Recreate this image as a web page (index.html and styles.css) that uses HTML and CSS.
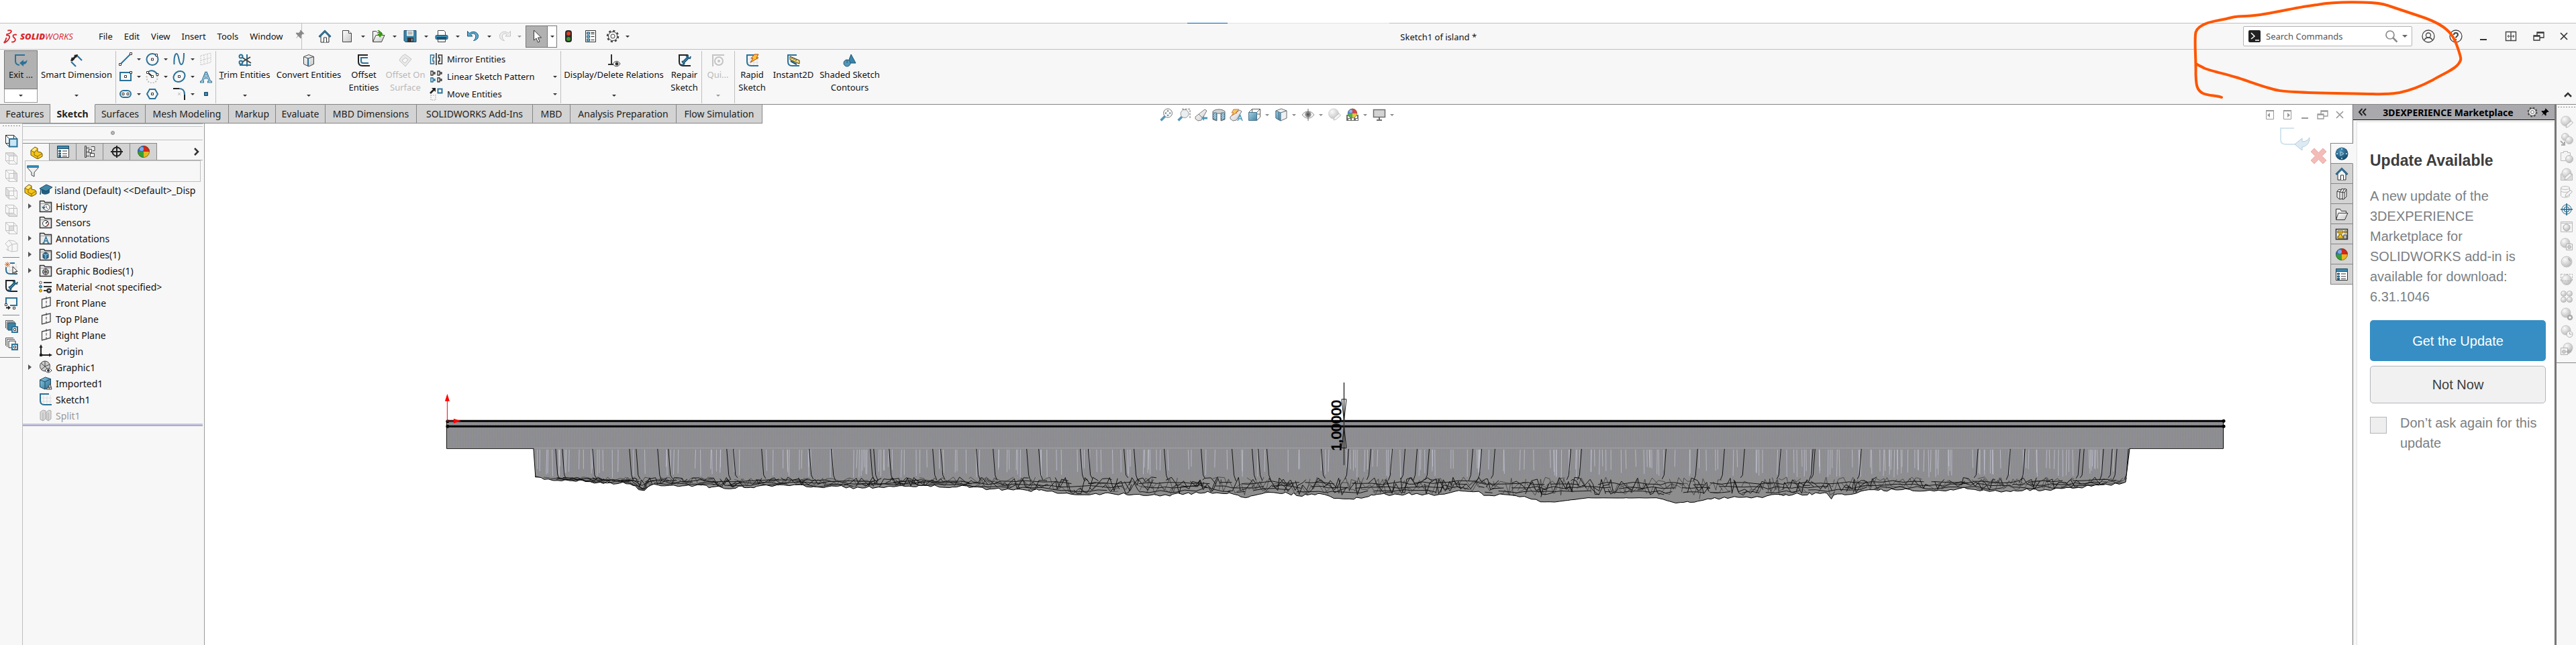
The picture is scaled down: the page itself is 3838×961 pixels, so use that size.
FILE: index.html
```html
<!DOCTYPE html>
<html lang="en">
<head>
<meta charset="utf-8">
<title>Sketch1 of island *</title>
<link rel="stylesheet" href="styles.css">
</head>
<body>
<svg class="defs" aria-hidden="true">
  <defs>
    <linearGradient id="gb" x1="0" y1="0" x2="1" y2="1"><stop offset="0" stop-color="#8fc8e2"/><stop offset="1" stop-color="#2a7095"/></linearGradient>
    <linearGradient id="gg" x1="0" y1="0" x2="1" y2="1"><stop offset="0" stop-color="#fff"/><stop offset="1" stop-color="#c4c4c4"/></linearGradient>
    <radialGradient id="gs" cx=".35" cy=".3" r=".8"><stop offset="0" stop-color="#fafafa"/><stop offset="1" stop-color="#b4b4b4"/></radialGradient>
    <radialGradient id="gn" cx=".4" cy=".3" r=".8"><stop offset="0" stop-color="#4d94ba"/><stop offset="1" stop-color="#0d3c5c"/></radialGradient>
    <pattern id="hatch" width="3" height="3" patternUnits="userSpaceOnUse"><path d="M0 3L3 0" stroke="#2a7095"/></pattern>
    <pattern id="lines" width="4" height="40" patternUnits="userSpaceOnUse"><rect width="4" height="40" fill="#8f8f8f"/><path d="M1.500 0L2.500 40" stroke="#8183a0" stroke-opacity=".55"/></pattern>
  </defs>
  <symbol id="home" viewBox="0 0 20 20"><path d="M4 9v10h12V9l-6-6z" fill="#f4f4f4" stroke="#333"/><path d="M8.500 19v-7h4v7" fill="#fff" stroke="#333"/><path d="M1.500 11L10 2.500l8.500 8.500" fill="none" stroke="#1b5577" stroke-width="3"/><path d="M2 10.500L10 2.500l8 8" fill="none" stroke="#4d9cc1"/></symbol>
  <symbol id="doc" viewBox="0 0 20 20"><path d="M3.500 1.500h9l4 4v13h-13z" fill="url(#gg)" stroke="#444"/><path d="M12.500 1.500v4h4" fill="#fff" stroke="#444"/></symbol>
  <symbol id="open" viewBox="0 0 20 20"><path d="M1.500 18V2.500h5l2 2h6V8" fill="#eee" stroke="#444"/><path d="M1.500 18.500L6 8.500h13l-4.500 10z" fill="url(#gg)" stroke="#444"/><path d="M8 1c4 0 6 2 6 5h3l-5 6-4-6h3c0-2-1-3-3-5z" fill="#399a12"/></symbol>
  <symbol id="folder" viewBox="0 0 20 20"><path d="M1.500 18V2.500h6l2 3h7V8" fill="#eee" stroke="#333"/><path d="M1.500 18.500L5 8.500h14l-4.500 10z" fill="url(#gg)" stroke="#333"/></symbol>
  <symbol id="save" viewBox="0 0 20 20"><path d="M1 1.500h18v17H3l-2-2z" fill="#3a84a9" stroke="#20506c"/><path d="M5 1.500h10v8H5z" fill="#eee"/><path d="M6.500 4h7M6.500 6.500h7" stroke="#777"/><path d="M6 12h9v7H6z" fill="#333"/><path d="M12 13.500h1.500v4H12z" fill="#7bc0e0"/></symbol>
  <symbol id="print" viewBox="0 0 20 20"><path d="M4.500 1.500h9l2 2V9h-11z" fill="#fff" stroke="#444"/><rect x="1" y="8.500" width="18" height="6" rx="1.500" fill="#3a8bb3" stroke="#20506c"/><path d="M3 12.500h14" stroke="#12384f" stroke-width="2"/><path d="M4.500 14.500h11v4h-11z" fill="#eee" stroke="#444"/></symbol>
  <symbol id="undo" viewBox="0 0 20 20"><path d="M1.500 2.500v7.500h7.500L6.500 7.500C10 4 15 7 13.500 12c-.5 2-1.500 3-3 4.500C15 16 18 13 17.500 9c-.6-5-7.500-8-13-3.500z" fill="#5aa9cc" stroke="#1e5d80"/></symbol>
  <symbol id="redo" viewBox="0 0 20 20"><path d="M18.500 2.500v7.500H11l2.500-2.500C10 4 5 7 6.500 12c.5 2 1.500 3 3 4.500C5 16 2 13 2.500 9c.6-5 7.500-8 13-3.500z" fill="#eee" stroke="#c4c4c4"/></symbol>
  <symbol id="cursor" viewBox="0 0 20 20"><path d="M5.500 1v15l3.500-3 2.500 6 2.500-1-2.500-6h5z" fill="#fff" stroke="#333"/></symbol>
  <symbol id="traffic" viewBox="0 0 20 20"><rect x="5" y="1" width="10" height="18" rx="4" fill="#2b2b2b"/><circle cx="10" cy="6" r="3" fill="#e03a1e"/><circle cx="10" cy="14" r="3" fill="#3b9a2b"/></symbol>
  <symbol id="options" viewBox="0 0 20 20"><path d="M2.500 1.500h15v17h-15z" fill="#f6f6f6" stroke="#333"/><path d="M4.500 4h4v3h-4zM4.500 9h4v3h-4zM4.500 14h4v3h-4z" fill="#77bfe0" stroke="#20506c"/><path d="M10.500 4.500h5M10.500 6.500h5M10.500 10.500h5M10.500 15.500h5" stroke="#333"/></symbol>
  <symbol id="gear" viewBox="0 0 20 20"><circle cx="10" cy="10" r="8" fill="none" stroke="#444" stroke-width="2.500" stroke-dasharray="3.140 3.140"/><circle cx="10" cy="10" r="6.700" fill="#f2f2f2" stroke="#444"/><circle cx="10" cy="10" r="3" fill="#fff" stroke="#444"/></symbol>
  <symbol id="pin" viewBox="0 0 20 20"><path d="M11 2l7 7-1.500 1-1.500-.5-3 3 .5 4-1.500 1.500-4-4.500-5 5 4-6-4-4L3.500 7l4 .5 3-3L10 3z"/></symbol>
  <symbol id="exit" viewBox="0 0 20 20"><path d="M16 2H2v9c0 4 2 5.500 6 6" fill="none" stroke="#2a7299" stroke-width="2"/><path d="M8 14l6-5v3c3 0 4-1 5.500-3 0 4-2 7-5.500 7v3z" fill="#2a7299"/></symbol>
  <symbol id="smart" viewBox="0 0 20 20"><path d="M10 2l8 8M2 12l7 7" stroke="#2a7299" stroke-width="2.200"/><path d="M2.500 10.500L9 3.500" stroke="#222" stroke-width="3"/><path d="M1 11l2-6 4 4zM12 1l-6 1 4 4z" fill="#222"/></symbol>
  <symbol id="line" viewBox="0 0 20 20"><path d="M2 18L18 2" stroke="#2a7299" stroke-width="2"/><path d="M.5 16.500h3v3h-3zM16.500.5h3v3h-3z" fill="#fff" stroke="#333"/></symbol>
  <symbol id="circle" viewBox="0 0 20 20"><circle cx="10" cy="10.500" r="8.500" fill="none" stroke="#2a7299" stroke-width="2"/><path d="M8.500 9h3v3h-3zM14.500 2.500h3v3h-3z" fill="#fff" stroke="#333"/></symbol>
  <symbol id="spline" viewBox="0 0 20 20"><path d="M2.500 18C2 7 4 2 6 2c4 0 3 16 7 16 3 0 4-6 4-17" fill="none" stroke="#2a7299" stroke-width="2"/></symbol>
  <symbol id="plane3" viewBox="0 0 20 20"><path d="M2 5l15-4v14L2 19zM2 12l15-4M7 4v14M12 3v13" fill="none" stroke="#c4c4c4" stroke-dasharray="2 1"/></symbol>
  <symbol id="rect" viewBox="0 0 20 20"><path d="M2 4h16v12H2z" fill="none" stroke="#2a7299" stroke-width="2"/><path d="M8.500 8.500h3v3h-3zM16.500 2.500h3v3h-3z" fill="#fff" stroke="#333"/></symbol>
  <symbol id="arc" viewBox="0 0 20 20"><path d="M4 3a8.500 8.500 0 0 1 13 4" fill="none" stroke="#2a7299" stroke-width="2"/><path d="M17 9a8 8 0 1 1-15 0" fill="none" stroke="#bbb" stroke-width="2" stroke-dasharray="2 2"/><path d="M3 4l7 6" stroke="#222" stroke-width="2"/><path d="M8.500 8.500h3v3h-3zM16 5.500h3v3h-3zM1.500 2.500h3v3h-3z" fill="#fff" stroke="#333"/></symbol>
  <symbol id="ellipse" viewBox="0 0 20 20"><ellipse cx="10" cy="10" rx="9" ry="7.500" transform="rotate(-38 10 10)" fill="none" stroke="#2a7299" stroke-width="2"/><path d="M8.500 8.500h3v3h-3z" fill="#fff" stroke="#333"/></symbol>
  <symbol id="text" viewBox="0 0 20 20"><path d="M10 3L4 18M10 3l6 15M6 12h8M1 18h6M12 18h7" fill="none" stroke="#2a7299" stroke-width="3"/><path d="M10 4L4 18M10 4l6 14M6 12h8M2 18h4M13 18h5" fill="none" stroke="#d5eaf4"/></symbol>
  <symbol id="slot" viewBox="0 0 20 20"><rect x="2" y="5" width="16" height="10" rx="5" fill="none" stroke="#2a7299" stroke-width="2"/><path d="M5 8.500h3v3H5zM12 8.500h3v3h-3z" fill="#fff" stroke="#333"/></symbol>
  <symbol id="hex" viewBox="0 0 20 20"><path d="M6 3h8l4 7-4 7H6l-4-7z" fill="none" stroke="#2a7299" stroke-width="2"/><path d="M8.500 8.500h3v3h-3z" fill="#fff" stroke="#333"/></symbol>
  <symbol id="fillet" viewBox="0 0 20 20"><path d="M1 2h9" stroke="#222" stroke-width="2"/><path d="M10 2c6 0 8 3 8 9" fill="none" stroke="#2a7299" stroke-width="2"/><path d="M18 11v8" stroke="#222" stroke-width="2"/><path d="M8 8l4 4M12 8l-4 4" stroke="#bbb"/></symbol>
  <symbol id="point" viewBox="0 0 20 20"><path d="M7.500 7.500h5v5h-5z" fill="#3a8bb3" stroke="#173f57"/></symbol>
  <symbol id="trim" viewBox="0 0 20 20"><path d="M13 1v18M2 17h17" stroke="#2a7299" stroke-width="2"/><path d="M5 5l14 9M5 13l13-8" stroke="#444" stroke-width="2"/><circle cx="4" cy="4" r="2.500" fill="none" stroke="#2a7299" stroke-width="2"/><circle cx="4" cy="13" r="2.500" fill="none" stroke="#2a7299" stroke-width="2"/></symbol>
  <symbol id="cube" viewBox="0 0 20 20"><path d="M2.500 4.500L10 1.500l7.500 3v11L10 19l-7.500-3.500z" fill="url(#gg)" stroke="#444"/><path d="M2.500 4.500L9 7v11.500M9 7l8.500-2.500" fill="none" stroke="#444"/><path d="M9 7v11" stroke="#2a7299" stroke-width="2"/></symbol>
  <symbol id="offset" viewBox="0 0 20 20"><path d="M16 2H2v10c0 4 2 6 6 6h11" fill="none" stroke="#222" stroke-width="2"/><path d="M16 6H6v5c0 2 1 3 3 3h8" fill="none" stroke="#2a7299" stroke-width="2"/></symbol>
  <symbol id="offsurf" viewBox="0 0 20 20"><path d="M10 1l9 7-9 11-9-9c2-5 5-8 9-9z" fill="#e9e9e9" stroke="#c4c4c4"/><path d="M10 6l4 3-5 5-4-4z" fill="#f7f7f7" stroke="#c4c4c4"/></symbol>
  <symbol id="mirror" viewBox="0 0 20 20"><path d="M10 1v18" stroke="#222" stroke-width="1.500"/><path d="M1.500 4v13h5v-4H5V8h1.500V4z" fill="none" stroke="#2a7299" stroke-width="1.500"/><path d="M18.500 4v13h-5v-4H15V8h-1.500V4z" fill="none" stroke="#333" stroke-width="1.500"/></symbol>
  <symbol id="pattern" viewBox="0 0 20 20"><path d="M2 2v6h3V6h3V4H5V2zM12 2v6h3V6h3V4h-3V2zM12 12v6h3v-2h3v-2h-3v-2z" fill="none" stroke="#333" stroke-width="1.300"/><path d="M2 12v6h3v-2h3v-2H5v-2z" fill="none" stroke="#2a7299" stroke-width="1.500"/></symbol>
  <symbol id="move" viewBox="0 0 20 20"><path d="M1 9l6-6" stroke="#222" stroke-width="2.500"/><path d="M9 1v6L3 1z" fill="#222"/><path d="M12.500 2.500h6v6h-6z" fill="#fff" stroke="#2a7299" stroke-width="2"/><path d="M2 12h7v7H2z" fill="none" stroke="#bbb" stroke-width="1.500" stroke-dasharray="1.500 1.500"/></symbol>
  <symbol id="relations" viewBox="0 0 20 20"><path d="M6 1v14M1 16h9" stroke="#333" stroke-width="2"/><path d="M8 15c4-5 8-5 11 0-3 5-8 5-11 0z" fill="#fff" stroke="#333"/><circle cx="14" cy="15" r="2.500" fill="#333"/></symbol>
  <symbol id="repair" viewBox="0 0 20 20"><path d="M15 2H2v10c0 4 2 6 6 6h11" fill="none" stroke="#222" stroke-width="2"/><path d="M7 14l8-8" stroke="#1e5877" stroke-width="4"/><path d="M6 11l2 2M7 14l7-8M12 4l3-1v3l3 1 1-3M5 16l3 1 2-3" stroke="#1e5877" stroke-width="2" fill="none"/><path d="M7.500 13.500l7-7" stroke="#5aa9cc"/></symbol>
  <symbol id="quick" viewBox="0 0 20 20"><path d="M2 19V2h17" fill="none" stroke="#c4c4c4" stroke-width="2"/><circle cx="11" cy="11" r="6" fill="none" stroke="#c4c4c4" stroke-width="2"/><circle cx="11" cy="11" r="2" fill="#c4c4c4"/></symbol>
  <symbol id="rapid" viewBox="0 0 20 20"><path d="M7 3v16M12 3v16M17 3v16M3 8h16M3 13h16" stroke="#ddd"/><path d="M12 2H2v10c0 4 2 6 6 6h11" fill="none" stroke="#2a7299" stroke-width="2"/><path d="M13 1h6l-3 5h3L7 13l4-6H8z" fill="#ffc52e" stroke="#b0430c"/></symbol>
  <symbol id="instant" viewBox="0 0 20 20"><path d="M15 2H2v10c0 4 2 6 6 6h11" fill="none" stroke="#2a7299" stroke-width="2"/><path d="M5 4l14 6v5L5 9z" fill="#ffe06a" stroke="#333"/><path d="M8 5v3M11 6.500v3M14 8v3" stroke="#333"/><path d="M6 11l9 5" stroke="#1e5877" stroke-width="2.500"/></symbol>
  <symbol id="shaded" viewBox="0 0 20 20"><path d="M12 1l7 13H7z" fill="#3a84a9" stroke="#1e5877"/><circle cx="6" cy="14" r="5" fill="#5797b8" stroke="#1e5877"/><path d="M6 14V9" stroke="#1e5877"/></symbol>
  <symbol id="sketch" viewBox="0 0 20 20"><path d="M7 3v16M12 3v16M17 3v16M3 8h16M3 13h16" stroke="#ddd"/><path d="M15 2H2v10c0 4 2 6 6 6h11" fill="none" stroke="#2a7299" stroke-width="2"/></symbol>
  <symbol id="sketchnew" viewBox="0 0 20 20"><path d="M7 3v16M12 3v16M17 3v16M3 8h16M3 13h16" stroke="#ddd"/><path d="M8 2h7M2 8v4c0 4 2 6 6 6h11" fill="none" stroke="#2a7299" stroke-width="2"/><path d="M4 0v8M0 4h8M1 1l6 6M7 1L1 7" stroke="#d9661c"/><path d="M12 7v10l2.500-2 1.500 4 1.500-1-1.500-3.500h3z" fill="#fff" stroke="#333"/></symbol>
  <symbol id="entmove" viewBox="0 0 20 20"><path d="M2 11V2h16v11H8" fill="none" stroke="#2a7299" stroke-width="2"/><path d="M.5 10.500h3v3h-3zM12.500 15.500h3v3h-3z" fill="#fff" stroke="#333"/><path d="M2 16.500h4" stroke="#222" stroke-width="2"/><path d="M5 13.500l4 3-4 3z" fill="#222"/></symbol>
  <symbol id="stack" viewBox="0 0 20 20"><path d="M1.500 13V1.500H13M3.500 15V3.500H15" fill="none" stroke="#555"/><path d="M5 5h11v11H5z" fill="#3a84a9" stroke="#1e4a63"/><path d="M11 11h8v8h-8z" fill="#fff" stroke="#2a7299" stroke-width="2"/><path d="M13.500 13.500h3v3h-3z" fill="#fff" stroke="#333"/></symbol>
  <symbol id="stack2" viewBox="0 0 20 20"><path d="M1.500 13V1.500H13M3.500 15V3.500H15" fill="none" stroke="#555"/><path d="M6 6h10v10H6z" fill="#f7f7f7" stroke="#333"/><path d="M11 11h8v8h-8z" fill="#fff" stroke="#2a7299" stroke-width="2"/><path d="M13.500 13.500h3v3h-3z" fill="#fff" stroke="#333"/></symbol>
  <symbol id="viewf" viewBox="0 0 20 20"><path d="M1.500 1.500h12v12h-12zM1.500 1.500l5 5M13.500 1.500l5 5M1.500 13.500l5 5" fill="none" stroke="#333"/><path d="M7 7h11.500v11.500H7z" fill="#c9e6f5" stroke="#2a7299" stroke-width="2"/></symbol>
  <symbol id="view0" viewBox="0 0 20 20"><path d="M1.500 1.500h12v12h-12zM6.500 6.500h12v12h-12zM1.500 1.500l5 5M13.500 1.500l5 5M1.500 13.500l5 5M13.500 13.500l5 5" fill="none" stroke="#c2c2c2"/></symbol>
  <symbol id="view1" viewBox="0 0 20 20"><path d="M1.500 1.500h12l5 5h-12z" fill="#ddd"/><use href="#view0"/></symbol>
  <symbol id="view2" viewBox="0 0 20 20"><path d="M13.500 1.500l5 5v12l-5-5z" fill="#ddd"/><use href="#view0"/></symbol>
  <symbol id="view3" viewBox="0 0 20 20"><path d="M1.500 1.500l5 5v12l-5-5z" fill="#ddd"/><use href="#view0"/></symbol>
  <symbol id="view4" viewBox="0 0 20 20"><path d="M1.500 13.500h12l5 5h-12z" fill="#ddd"/><use href="#view0"/></symbol>
  <symbol id="view5" viewBox="0 0 20 20"><path d="M6.500 6.500h7v7h-7z" fill="#ddd"/><use href="#view0"/></symbol>
  <symbol id="view6" viewBox="0 0 20 20"><path d="M6 2l8 1 5 4v11l-9 1-8-4M6 2L1 7l4 5 6-4zM5 12v6M11 8l8-1M11 8v11" fill="none" stroke="#c2c2c2"/></symbol>
  <symbol id="part" viewBox="0 0 20 20"><path d="M2 7l6-5 4 2v5l5 1 2 2v4l-7 4-10-6z" fill="#f5c518" stroke="#6b5208"/><path d="M2 7l5 3 5-4M7 10v4l5 2 6-4M12 16v3" fill="none" stroke="#8a6a0c"/><path d="M3 7l5-4 3 1.500L7 8.500z" fill="#ffe98a"/></symbol>
  <symbol id="props" viewBox="0 0 20 20"><path d="M1.500 2h17v16.500h-17z" fill="#fff" stroke="#333"/><path d="M1.500 1.500h17v4h-17z" fill="#3a8bb3" stroke="#1e4a63"/><path d="M3.500 8h3v2h-3zM3.500 12h3v2h-3zM3.500 15.500h3v2h-3z" fill="#3a8bb3" stroke="#1e4a63"/><path d="M9 9h7M9 13h7M9 16.500h7" stroke="#333"/></symbol>
  <symbol id="config" viewBox="0 0 20 20"><path d="M4.500 1.500h-2v17h2zM5 10.500h4M5 4.500h4M5 16.500h4" fill="none" stroke="#444"/><path d="M8.500 6.500h4v5h-4zM12 2.500h5v6h-3M10.500 12.500h6v5h-6z" fill="#eee" stroke="#444"/></symbol>
  <symbol id="target" viewBox="0 0 20 20"><circle cx="10" cy="10" r="6.500" fill="none" stroke="#222" stroke-width="2"/><path d="M10 1v18M1 10h18" stroke="#222" stroke-width="2"/></symbol>
  <symbol id="ball" viewBox="0 0 20 20"><circle cx="10" cy="10" r="9" fill="#e5b821"/><path d="M10 10V1a9 9 0 0 0-9 9z" fill="#2f6fd0"/><path d="M10 10V1a9 9 0 0 1 9 9z" fill="#d3281f"/><path d="M10 10H1a9 9 0 0 0 9 9z" fill="#35a035"/><circle cx="7" cy="6" r="3" fill="#fff" fill-opacity=".4"/><circle cx="10" cy="10" r="8.500" fill="none" stroke="#333" stroke-opacity=".5"/></symbol>
  <symbol id="filter" viewBox="0 0 20 20"><path d="M2 2h16v3l-6 7v6l-4-2v-4L2 5z" fill="#eee" stroke="#444"/><path d="M1 1.500h18v3.500H1z" fill="#2f86b0"/></symbol>
  <symbol id="cap" viewBox="0 0 20 20"><path d="M4 9v6c4 3 9 2 12-1V8z" fill="#235f80"/><path d="M1 8l10-6 9 4-9 6z" fill="#3f87aa" stroke="#1b4a64"/><path d="M3 9l-1 8" stroke="#1b4a64" stroke-width="1.500"/></symbol>
  <symbol id="fold" viewBox="0 0 20 20"><path d="M1.500 18.500V2.500h6l1.500 2h9.500v14z" fill="#eaeaea" stroke="#333" stroke-width="1.500"/><path d="M2 6.500h16" stroke="#999"/></symbol>
  <symbol id="fhist" viewBox="0 0 20 20"><use href="#fold"/><circle cx="11.500" cy="12" r="4.500" fill="#fff" stroke="#444"/><path d="M4 11l3 4 3-4z" fill="#2a7299"/><path d="M11 9.500V12l2 2" fill="none" stroke="#444"/></symbol>
  <symbol id="fsens" viewBox="0 0 20 20"><use href="#fold"/><circle cx="10" cy="12" r="4.500" fill="#fff" stroke="#333"/><path d="M10 12l3-3" stroke="#222" stroke-width="1.500"/><path d="M10 16l4-4v3z" fill="#e03a1e"/></symbol>
  <symbol id="fann" viewBox="0 0 20 20"><use href="#fold"/><path d="M7 17l3.500-9 3.500 9M8 14h5M5.500 17h3M12.500 17h3" fill="none" stroke="#2a7299" stroke-width="1.500"/></symbol>
  <symbol id="fsolid" viewBox="0 0 20 20"><use href="#fold"/><path d="M6 9l4-2 4 2v6l-4 2-4-2z" fill="#2a7299" stroke="#153f57"/><path d="M6 9l4 2 4-2M10 11v6" stroke="#9fd0e6" fill="none"/></symbol>
  <symbol id="fgraph" viewBox="0 0 20 20"><use href="#fold"/><circle cx="10" cy="12" r="4.500" fill="#bbb" stroke="#444"/><path d="M10 7.500v9M6 10l8 4M14 10l-8 4" stroke="#444"/></symbol>
  <symbol id="material" viewBox="0 0 20 20"><path d="M7 4h12M7 10h12M7 16h5" stroke="#333" stroke-width="2"/><circle cx="2.500" cy="4" r="1.800" fill="#fff" stroke="#555"/><circle cx="2.500" cy="10" r="2" fill="#4d9cc1" stroke="#1e5877"/><circle cx="2.500" cy="16" r="2" fill="#f5c518" stroke="#8a6a0c"/><circle cx="15" cy="16" r="2.500" fill="none" stroke="#333" stroke-width="2.500"/></symbol>
  <symbol id="plane" viewBox="0 0 20 20"><path d="M4.500 5L17 2v12.500L4.500 18z" fill="none" stroke="#444" stroke-width="1.300"/><path d="M11 1v18" stroke="#444" stroke-dasharray="4 2"/></symbol>
  <symbol id="origin" viewBox="0 0 20 20"><path d="M3 3v13h14" fill="none" stroke="#222" stroke-width="2"/><path d="M3 0l2.500 5h-5zM20 16l-5-2.500v5zM1 14h4v4H1z" fill="#222"/></symbol>
  <symbol id="graphic" viewBox="0 0 20 20"><circle cx="9" cy="8.500" r="7.500" fill="#ccc" stroke="#444"/><path d="M9 1v8l-6 5M9 9l7-3M9 9L3 4M9 9l5 5" stroke="#444" fill="none"/><path d="M9 15c3-4 7-4 10 0-3 4-7 4-10 0z" fill="#fff" stroke="#333"/><circle cx="14" cy="15" r="2" fill="#333"/></symbol>
  <symbol id="imported" viewBox="0 0 20 20"><path d="M1.500 5l8-4 8 2.500v11L9 19l-7.500-3.500z" fill="url(#gb)" stroke="#1b4a64"/><path d="M1.500 5L9 8v11M9 8l8.500-4.500" fill="none" stroke="#1b4a64"/><path d="M11 19l6-8 2 8zM14 15l2 4M13 16h6" fill="#ddd" stroke="#444"/></symbol>
  <symbol id="split" viewBox="0 0 20 20"><path d="M2 5l4-3 4 1v12l-4 3-4-2zM11 5l4-3 3 1v12l-4 3-3-2z" fill="#d8d8d8" stroke="#aaa"/><path d="M6 6v12M14 6v12" stroke="#aaa"/></symbol>
  <symbol id="zoomfit" viewBox="0 0 20 20"><path d="M1.500 18.500L8 12" stroke="#3a84a9" stroke-width="3.500"/><circle cx="12" cy="7.500" r="6.500" fill="#eef5f8" stroke="#666"/><path d="M12 3l-1.500 2h3zM12 12l-1.500-2h3zM7.500 7.500l2-1.500v3zM16.500 7.500l-2-1.500v3z" fill="#333"/></symbol>
  <symbol id="zoomarea" viewBox="0 0 20 20"><path d="M7 1.500h12v14" fill="none" stroke="#555" stroke-dasharray="3 1.500"/><path d="M1.500 18.500L7 13" stroke="#3a84a9" stroke-width="3.500"/><circle cx="11" cy="8.500" r="6" fill="#e4ecf0" stroke="#888"/></symbol>
  <symbol id="scope" viewBox="0 0 20 20"><path d="M1 13L15 2l3 2-8 14-5 1-4-3z" fill="url(#gg)" stroke="#666"/><path d="M6 9l5 5" stroke="#666"/><path d="M10 15l4-4v2.500h5v3h-5V19z" fill="#2f86b0"/></symbol>
  <symbol id="section" viewBox="0 0 20 20"><path d="M1 5c4-4 14-4 18 0v12l-6 2V8H7v11l-6-2z" fill="#ccc" stroke="#555"/><path d="M1.500 7h5v11l-5-2zM13.500 7h5v9l-5 2z" fill="#a8d4e8"/><path d="M1.500 7h5v11l-5-2zM13.500 7h5v9l-5 2z" fill="url(#hatch)" stroke="#2a5d78"/></symbol>
  <symbol id="dynann" viewBox="0 0 20 20"><path d="M1 13L15 3l3 2-8 13-5 1-4-3z" fill="url(#gg)" stroke="#666"/><path d="M6 2h8L9 7h2l-8 4 3-4H3z" fill="#f7c04a" stroke="#c4611a"/><path d="M12 19l3.500-9 3.500 9M13 16h5" fill="none" stroke="#2f86b0" stroke-width="1.500"/></symbol>
  <symbol id="orient" viewBox="0 0 20 20"><path d="M1.500 6.500l5-5h12v12l-5 5M6.500 1.500v5M13.500 6.500l5-5M14 9h4" fill="none" stroke="#444"/><path d="M1.500 6.500h12v12h-12z" fill="url(#gb)" stroke="#2a5d78"/></symbol>
  <symbol id="display" viewBox="0 0 20 20"><path d="M2 4l8-3 8 3v11l-9 4-7-4z" fill="#eee" stroke="#555"/><path d="M2 4l7 3v12l-7-4z" fill="url(#gb)" stroke="#2a5d78"/><path d="M9 7l9-3M6 5.500v12" stroke="#2a5d78"/></symbol>
  <symbol id="eye" viewBox="0 0 20 20"><path d="M1 10c5-7 13-7 18 0-5 7-13 7-18 0z" fill="#eee" stroke="#888"/><circle cx="10" cy="9.500" r="4.500" fill="#777"/><circle cx="10" cy="9.500" r="2" fill="#333"/><path d="M10 1v18" stroke="#555"/></symbol>
  <symbol id="spheredit" viewBox="0 0 20 20"><circle cx="9" cy="8.500" r="7.500" fill="url(#gs)" stroke="#ccc"/><path d="M9 18l1-4 7-6 2.500 3-7 6z" fill="#f4f4f4" stroke="#b5b5b5"/></symbol>
  <symbol id="scene" viewBox="0 0 20 20"><path d="M1 10h18v9H1z" fill="#555"/><path d="M3 12h3v3H3zM9 15h3v3H9zM14 12h3v3h-3zM4 16h3v2H4zM15 16h3v2h-3z" fill="#fff"/><svg x="2" y="0" width="16" height="16"><use href="#ball"/></svg></symbol>
  <symbol id="monitor" viewBox="0 0 20 20"><path d="M1.500 2.500h17v11h-17z" fill="#ccc" stroke="#555" stroke-width="1.500"/><path d="M10 14v4M6 18h8" stroke="#555" stroke-width="2"/></symbol>
  <symbol id="cmd" viewBox="0 0 20 20"><rect x="1" y="1" width="18" height="18" rx="2" fill="#222"/><path d="M5 5l5 5-5 4M11 16h6" fill="none" stroke="#fff" stroke-width="1.500"/></symbol>
  <symbol id="search" viewBox="0 0 20 20"><circle cx="8" cy="8" r="6" fill="none" stroke="#8a8a8a" stroke-width="1.700"/><path d="M12.500 12.500l6 6" stroke="#8a8a8a" stroke-width="2.500"/></symbol>
  <symbol id="user" viewBox="0 0 20 20"><circle cx="10" cy="10" r="9" fill="none" stroke="#444" stroke-width="1.300"/><circle cx="10" cy="8.500" r="3.500" fill="none" stroke="#444" stroke-width="1.300"/><path d="M4 16c1-3 3-4 6-4s5 1 6 4" fill="none" stroke="#444" stroke-width="1.300"/></symbol>
  <symbol id="help" viewBox="0 0 20 20"><circle cx="10" cy="10" r="9" fill="none" stroke="#444" stroke-width="1.300"/><path d="M7 8c0-4 6-4 6 0 0 2-3 2-3 4.500M10 14v2" fill="none" stroke="#444" stroke-width="2"/></symbol>
  <symbol id="min" viewBox="0 0 20 20"><path d="M5 15h10" stroke="currentColor" stroke-width="2"/></symbol>
  <symbol id="span" viewBox="0 0 20 20"><path d="M2.500 3.500h15v13h-15zM10 3v14" fill="none" stroke="#444" stroke-width="1.400"/><path d="M5 10h10M7 8l-2 2 2 2M13 8l2 2-2 2" fill="none" stroke="#444"/></symbol>
  <symbol id="restore" viewBox="0 0 20 20"><path d="M3 9h9v7H3zM8 9V4h10v8h-6M3 10h9M8 5h10" fill="none" stroke="currentColor" stroke-width="1.300"/></symbol>
  <symbol id="close" viewBox="0 0 20 20"><path d="M5 5l10 10M15 5L5 15" stroke="currentColor" stroke-width="1.700"/></symbol>
  <symbol id="paneL" viewBox="0 0 20 20"><path d="M4.500 4h11v12.500h-11z" fill="none" stroke="currentColor"/><path d="M4 4h12" stroke="currentColor" stroke-width="2"/><path d="M10 7v7l-4-3.500z" fill="currentColor"/></symbol>
  <symbol id="paneR" viewBox="0 0 20 20"><path d="M4.500 4h11v12.500h-11z" fill="none" stroke="currentColor"/><path d="M4 4h12" stroke="currentColor" stroke-width="2"/><path d="M10 7v7l4-3.500z" fill="currentColor"/></symbol>
  <symbol id="up" viewBox="0 0 20 20"><path d="M5 12l5-5 5 5" fill="none" stroke="#333" stroke-width="2.500"/></symbol>
  <symbol id="right" viewBox="0 0 20 20"><path d="M8 5l5 5-5 5" fill="none" stroke="#333" stroke-width="2.500"/></symbol>
  <symbol id="left2" viewBox="0 0 20 20"><path d="M9.500 5L5 10l4.500 5M15 5l-4.500 5 4.500 5" fill="none" stroke="#222" stroke-width="2"/></symbol>
  <symbol id="compass" viewBox="0 0 20 20"><circle cx="10" cy="10" r="9.500" fill="url(#gn)"/><path d="M8 7l5 3-5 3z" fill="none" stroke="#a9d3e8"/><path d="M9 3h2M9 17h2M3 9v2M17 9v2" stroke="#d5eaf4" stroke-width="1.500"/></symbol>
  <symbol id="books" viewBox="0 0 20 20"><path d="M3 6l3-3 3 1 1-2 3 1 1-1 3 1v11l-4 4-3-1-3 1-4-3z" fill="#eee" stroke="#333"/><path d="M3 6l4 1v11M7 7l3-4M7 7l4 .5v11M11 7.500l3-5M11 7.500l3 .500v9M14 8l3-5" fill="none" stroke="#333"/></symbol>
  <symbol id="palette" viewBox="0 0 20 20"><path d="M1.500 2.500h17v15h-17z" fill="#eee" stroke="#333" stroke-width="1.500"/><path d="M4 5h8v3H4zM14 5h3v3h-3zM6 10h4v3h2v3H4v-3h2z" fill="#f5c518" stroke="#6b5208"/><path d="M13 11h4v6h-4z" fill="#ccc" stroke="#333"/></symbol>
  <symbol id="sph" viewBox="0 0 20 20"><circle cx="10" cy="10" r="8" fill="url(#gs)" stroke="#c4c4c4"/><path d="M12 4c3 1 4 4 4 6-2-1-4-3-4-6z" fill="#b0b0b0"/></symbol>
  <symbol id="sph2" viewBox="0 0 20 20"><circle cx="8" cy="6" r="5.500" fill="url(#gs)" stroke="#c4c4c4"/><circle cx="14" cy="11" r="5.500" fill="url(#gs)" stroke="#c4c4c4"/><path d="M1 12l5 5M7 13v5H2" fill="none" stroke="#aaa" stroke-width="2"/></symbol>
  <symbol id="sphdoc" viewBox="0 0 20 20"><path d="M1.500 3.500h4V1.500h6v2h4v12h-14z" fill="#f4f4f4" stroke="#bbb"/><circle cx="14" cy="13" r="5.500" fill="url(#gs)" stroke="#bbb"/></symbol>
  <symbol id="sphscene" viewBox="0 0 20 20"><path d="M1.500 9h17v9.500h-17z" fill="#ddd" stroke="#bbb"/><circle cx="10" cy="8" r="7" fill="url(#gs)" stroke="#c4c4c4"/><path d="M7 18l1-4 7-6 2.500 3-7 6z" fill="#f4f4f4" stroke="#b5b5b5"/></symbol>
  <symbol id="sphcan" viewBox="0 0 20 20"><ellipse cx="8" cy="4" rx="6.500" ry="2.500" fill="#f4f4f4" stroke="#bbb"/><path d="M1.500 4v12c2 3 10 3 13 0V4M1.500 9c3 2 9 2 13 0" fill="none" stroke="#bbb"/><path d="M8 17l1-4 7-6 2.500 3-7 6z" fill="#f4f4f4" stroke="#b5b5b5"/></symbol>
  <symbol id="bluetarget" viewBox="0 0 20 20"><g fill="none" stroke="#1e6287"><circle cx="10" cy="10" r="7"/><circle cx="10" cy="10" r="4"/><path d="M10 1v18M1 10h18" stroke-width="1.500"/></g></symbol>
  <symbol id="sphwin" viewBox="0 0 20 20"><path d="M1.500 2.500h17v15h-17zM1.500 4.500h17" fill="#f4f4f4" stroke="#bbb"/><circle cx="10" cy="11" r="5" fill="url(#gs)" stroke="#aaa"/></symbol>
  <symbol id="sphbox" viewBox="0 0 20 20"><circle cx="8" cy="8" r="7" fill="url(#gs)" stroke="#c4c4c4"/><path d="M9.500 9.500h9v9h-9z" fill="#f4f4f4" stroke="#b0b0b0"/><circle cx="14" cy="14" r="2.500" fill="#ccc" stroke="#b0b0b0"/></symbol>
  <symbol id="sphdash" viewBox="0 0 20 20"><circle cx="10" cy="11" r="7.500" fill="url(#gs)" stroke="#c4c4c4"/><path d="M1.500 2.500h17v10h-17z" fill="none" stroke="#b0b0b0" stroke-dasharray="2.500 1.500"/></symbol>
  <symbol id="sph4" viewBox="0 0 20 20"><g fill="url(#gs)" stroke="#bbb"><circle cx="5.500" cy="5.500" r="4"/><circle cx="14.500" cy="5.500" r="4"/><circle cx="5.500" cy="14.500" r="4"/><circle cx="14.500" cy="14.500" r="4"/></g></symbol>
  <symbol id="sphgear" viewBox="0 0 20 20"><circle cx="9" cy="8" r="7" fill="url(#gs)" stroke="#c4c4c4"/><circle cx="15" cy="15" r="3" fill="#fff" stroke="#aaa" stroke-width="2.500"/></symbol>
  <symbol id="sphclock" viewBox="0 0 20 20"><circle cx="9" cy="8" r="7" fill="url(#gs)" stroke="#c4c4c4"/><circle cx="14.500" cy="14" r="4.500" fill="#f7f7f7" stroke="#b0b0b0"/><path d="M14.500 11v3h3" fill="none" stroke="#aaa"/></symbol>
  <symbol id="sphback" viewBox="0 0 20 20"><circle cx="12" cy="8" r="7" fill="url(#gs)" stroke="#c4c4c4"/><path d="M1.500 8.500h10v10h-10z" fill="#f4f4f4" stroke="#b0b0b0"/><circle cx="6" cy="14" r="2.500" fill="#ccc" stroke="#b0b0b0"/><path d="M9 14l5-4v3l4-3c0 4-2 6-4 6v2z" fill="#b0b0b0"/></symbol>
</svg>

<div class="app">
  <header class="titlebar">
    <div class="brand">
      <svg class="ds" viewBox="0 0 20 20" aria-hidden="true"><path d="M6 1.500c4-1 6 0 5 2C10 5.500 7 6.500 4 7M4 8.500c4-1 6 1 4 4.500C6.500 16 4 18 .8 19c2-2 3-5 3.700-7.500M19 7.500c-3-1-6 0-5 2.500.7 2 3.500 2.500 3 5-.5 2-3 3-5.500 2.500" fill="none" stroke="#d8272c" stroke-width="1.800"/></svg>
      <span><b>SOLID</b>WORKS</span>
    </div>
    <nav class="menu">
      <button>File</button><button>Edit</button><button>View</button><button>Insert</button><button>Tools</button><button>Window</button>
      <button class="pinbtn" aria-label="Pin menu"><svg class="i16"><use href="#pin"/></svg></button>
    </nav>
    <div class="quick">
      <button class="q-solo" aria-label="Home"><svg class="ic"><use href="#home"/></svg></button>
      <button class="q" aria-label="New"><svg class="ic"><use href="#doc"/></svg></button><button class="qa" aria-label="New options"><i class="caret"></i></button>
      <button class="q" aria-label="Open"><svg class="ic"><use href="#open"/></svg></button><button class="qa" aria-label="Open options"><i class="caret"></i></button>
      <button class="q" aria-label="Save"><svg class="ic"><use href="#save"/></svg></button><button class="qa" aria-label="Save options"><i class="caret"></i></button>
      <button class="q" aria-label="Print"><svg class="ic"><use href="#print"/></svg></button><button class="qa" aria-label="Print options"><i class="caret"></i></button>
      <button class="q" aria-label="Undo"><svg class="ic"><use href="#undo"/></svg></button><button class="qa" aria-label="Undo options"><i class="caret"></i></button>
      <button class="q" aria-label="Redo"><svg class="ic"><use href="#redo"/></svg></button><button class="qa narrow" aria-label="Redo options"><i class="caret dim"></i></button>
      <button class="select" aria-label="Select"><svg class="ic"><use href="#cursor"/></svg></button><button class="select-more" aria-label="Select options"><i class="caret"></i></button>
      <button class="q-tool" aria-label="Rebuild"><svg class="ic"><use href="#traffic"/></svg></button>
      <button class="q-tool" aria-label="File properties"><svg class="ic"><use href="#options"/></svg></button>
      <button class="q-tool" aria-label="Options"><svg class="ic"><use href="#gear"/></svg></button><button class="qg" aria-label="More options"><i class="caret"></i></button>
    </div>
    <div class="doc-title">Sketch1 of island *</div>
    <div class="title-right">
      <div class="search">
        <svg class="ic"><use href="#cmd"/></svg>
        <input type="text" placeholder="Search Commands" aria-label="Search Commands">
        <button aria-label="Search"><svg class="ic"><use href="#search"/></svg></button>
        <button aria-label="Search options"><i class="caret big"></i></button>
      </div>
      <button aria-label="Account"><svg class="ic"><use href="#user"/></svg></button>
      <button aria-label="Help"><svg class="ic"><use href="#help"/></svg></button>
      <button aria-label="Minimize"><svg class="ic"><use href="#min"/></svg></button>
      <button aria-label="Span displays"><svg class="ic"><use href="#span"/></svg></button>
      <button aria-label="Restore"><svg class="ic"><use href="#restore"/></svg></button>
      <button aria-label="Close"><svg class="ic"><use href="#close"/></svg></button>
    </div>
    <div class="snap"><i></i></div>
  </header>

  <section class="ribbon">
    <div class="exit"><button class="exit-main"><svg class="ic"><use href="#exit"/></svg>Exit ...</button><button class="exit-more" aria-label="Exit options"><i class="caret"></i></button></div>
    <button class="cmd w116"><svg class="ic"><use href="#smart"/></svg>Smart Dimension<i class="caret"></i></button>
    <div class="tools">
      <button aria-label="Line"><svg class="ic"><use href="#line"/></svg><i class="caret"></i></button>
      <button aria-label="Circle"><svg class="ic"><use href="#circle"/></svg><i class="caret"></i></button>
      <button aria-label="Spline"><svg class="ic"><use href="#spline"/></svg><i class="caret"></i></button>
      <button aria-label="Plane"><svg class="ic"><use href="#plane3"/></svg></button>
      <button aria-label="Rectangle"><svg class="ic"><use href="#rect"/></svg><i class="caret"></i></button>
      <button aria-label="Arc"><svg class="ic"><use href="#arc"/></svg><i class="caret"></i></button>
      <button aria-label="Ellipse"><svg class="ic"><use href="#ellipse"/></svg><i class="caret"></i></button>
      <button aria-label="Text"><svg class="ic"><use href="#text"/></svg></button>
      <button aria-label="Slot"><svg class="ic"><use href="#slot"/></svg><i class="caret"></i></button>
      <button aria-label="Polygon"><svg class="ic"><use href="#hex"/></svg></button>
      <button aria-label="Fillet"><svg class="ic"><use href="#fillet"/></svg><i class="caret"></i></button>
      <button aria-label="Point"><svg class="ic"><use href="#point"/></svg></button>
    </div>
    <button class="cmd w86"><svg class="ic"><use href="#trim"/></svg><span><u>T</u>rim Entities</span><i class="caret"></i></button>
    <button class="cmd w104"><svg class="ic"><use href="#cube"/></svg>Convert Entities<i class="caret"></i></button>
    <button class="cmd w60"><svg class="ic"><use href="#offset"/></svg>Offset<br>Entities</button>
    <button class="cmd w64" disabled><svg class="ic"><use href="#offsurf"/></svg>Offset On<br>Surface</button>
    <div class="list">
      <button><svg class="ic"><use href="#mirror"/></svg>Mirror Entities</button>
      <button><svg class="ic"><use href="#pattern"/></svg>Linear Sketch Pattern<i class="caret"></i></button>
      <button><svg class="ic"><use href="#move"/></svg>Move Entities<i class="caret"></i></button>
    </div>
    <button class="cmd w158 sep"><svg class="ic"><use href="#relations"/></svg>Display/Delete Relations<i class="caret"></i></button>
    <button class="cmd w51"><svg class="ic"><use href="#repair"/></svg>Repair<br>Sketch</button>
    <button class="cmd w49 sep" disabled><svg class="ic"><use href="#quick"/></svg>Qui...<i class="caret dim"></i></button>
    <button class="cmd w52 sep"><svg class="ic"><use href="#rapid"/></svg>Rapid<br>Sketch</button>
    <button class="cmd w70"><svg class="ic"><use href="#instant"/></svg>Instant2D</button>
    <button class="cmd w98"><svg class="ic"><use href="#shaded"/></svg>Shaded Sketch<br>Contours</button>
    <button class="collapse" aria-label="Collapse ribbon"><svg class="ic"><use href="#up"/></svg></button>
  </section>

  <div class="work">
    <main class="main">
      <div class="tabrow">
        <nav class="tabs">
          <button class="t75">Features</button><button class="t67 on">Sketch</button><button class="t75">Surfaces</button><button class="t124">Mesh Modeling</button><button class="t70">Markup</button><button class="t74">Evaluate</button><button class="t136">MBD Dimensions</button><button class="t173">SOLIDWORKS Add-Ins</button><button class="t56">MBD</button><button class="t158">Analysis Preparation</button><button class="t128">Flow Simulation</button>
        </nav>
        <div class="docctl">
          <button aria-label="Dock left"><svg class="ic"><use href="#paneL"/></svg></button><button aria-label="Dock right"><svg class="ic"><use href="#paneR"/></svg></button><button aria-label="Minimize document"><svg class="ic"><use href="#min"/></svg></button><button aria-label="Restore document"><svg class="ic"><use href="#restore"/></svg></button><button aria-label="Close document"><svg class="ic"><use href="#close"/></svg></button>
        </div>
      </div>
      <div class="hud">
        <button aria-label="Zoom to fit"><svg class="ic"><use href="#zoomfit"/></svg></button><button aria-label="Zoom to area"><svg class="ic"><use href="#zoomarea"/></svg></button><button aria-label="Previous view"><svg class="ic"><use href="#scope"/></svg></button><button aria-label="Section view"><svg class="ic"><use href="#section"/></svg></button><button aria-label="Annotation views"><svg class="ic"><use href="#dynann"/></svg></button><button class="more" aria-label="View orientation"><svg class="ic"><use href="#orient"/></svg><i class="caret"></i></button><button class="more" aria-label="Display style"><svg class="ic"><use href="#display"/></svg><i class="caret"></i></button><button class="more" aria-label="Hide or show items"><svg class="ic"><use href="#eye"/></svg><i class="caret"></i></button><button aria-label="Edit appearance"><svg class="ic"><use href="#spheredit"/></svg></button><button class="more" aria-label="Apply scene"><svg class="ic"><use href="#scene"/></svg><i class="caret"></i></button><button class="more" aria-label="View settings"><svg class="ic"><use href="#monitor"/></svg><i class="caret"></i></button>
      </div>
      <div class="stage">
        <aside class="strip">
          <div class="grip"></div>
          <button aria-label="Front view"><svg class="ic"><use href="#viewf"/></svg></button>
          <button aria-label="Top view"><svg class="ic"><use href="#view1"/></svg></button>
          <button aria-label="Right view"><svg class="ic"><use href="#view2"/></svg></button>
          <button aria-label="Left view"><svg class="ic"><use href="#view3"/></svg></button>
          <button aria-label="Bottom view"><svg class="ic"><use href="#view4"/></svg></button>
          <button aria-label="Back view"><svg class="ic"><use href="#view5"/></svg></button>
          <button aria-label="Isometric view"><svg class="ic"><use href="#view6"/></svg></button>
          <hr>
          <button aria-label="New sketch"><svg class="ic"><use href="#sketchnew"/></svg></button>
          <button aria-label="Repair sketch"><svg class="ic"><use href="#repair"/></svg></button>
          <button aria-label="Move entities"><svg class="ic"><use href="#entmove"/></svg></button>
          <hr>
          <button aria-label="Make block"><svg class="ic"><use href="#stack"/></svg></button>
          <button aria-label="Edit block"><svg class="ic"><use href="#stack2"/></svg></button>
          <hr class="full">
        </aside>
        <aside class="tree">
          <div class="handle"><i></i></div>
          <div class="ptabs">
            <button class="on" aria-label="Feature tree"><svg class="ic"><use href="#part"/></svg></button><button aria-label="Properties"><svg class="ic"><use href="#props"/></svg></button><button aria-label="Configurations"><svg class="ic"><use href="#config"/></svg></button><button aria-label="Dimensions"><svg class="ic"><use href="#target"/></svg></button><button aria-label="Display manager"><svg class="ic"><use href="#ball"/></svg></button>
            <button class="next" aria-label="More tabs"><svg class="ic"><use href="#right"/></svg></button>
          </div>
          <div class="filter"><svg class="ic"><use href="#filter"/></svg><input type="text" aria-label="Filter"></div>
          <ul>
            <li class="root"><svg class="ic"><use href="#part"/></svg><svg class="ic"><use href="#cap"/></svg><span>island (Default) &lt;&lt;Default&gt;_Disp</span></li>
            <li class="exp"><svg class="ic"><use href="#fhist"/></svg>History</li>
            <li><svg class="ic"><use href="#fsens"/></svg>Sensors</li>
            <li class="exp"><svg class="ic"><use href="#fann"/></svg>Annotations</li>
            <li class="exp"><svg class="ic"><use href="#fsolid"/></svg>Solid Bodies(1)</li>
            <li class="exp"><svg class="ic"><use href="#fgraph"/></svg>Graphic Bodies(1)</li>
            <li><svg class="ic"><use href="#material"/></svg>Material &lt;not specified&gt;</li>
            <li><svg class="ic"><use href="#plane"/></svg>Front Plane</li>
            <li><svg class="ic"><use href="#plane"/></svg>Top Plane</li>
            <li><svg class="ic"><use href="#plane"/></svg>Right Plane</li>
            <li><svg class="ic"><use href="#origin"/></svg>Origin</li>
            <li class="exp"><svg class="ic"><use href="#graphic"/></svg>Graphic1</li>
            <li><svg class="ic"><use href="#imported"/></svg>Imported1</li>
            <li><svg class="ic"><use href="#sketch"/></svg>Sketch1</li>
            <li class="off"><svg class="ic"><use href="#split"/></svg>Split1</li>
          </ul>
          <div class="rollback"></div>
        </aside>
        <div class="viewport">
          <svg class="model" viewBox="305 184 3201 777" preserveAspectRatio="xMidYMin meet">
            <g id="body"></g>
            <g stroke="#000" fill="none">
              <path d="M665.500 627V668.500H795M3174 668.500H3313.500V627"/>
              <path d="M666 627.500H3314" stroke-width="3"/><path d="M666 635.500H3314" stroke-width="3"/>
            </g>
            <g><circle cx="667" cy="628" r="2.500"/><circle cx="667" cy="635.500" r="2.500"/><circle cx="3314" cy="627.500" r="2.500"/><circle cx="3314" cy="635.500" r="2.500"/></g>
            <path d="M666.500 628V590M666 627.500h14" stroke="#f00"/><path d="M666.500 587l3.500 11h-7zM687 627.500l-11-3.500v7z" fill="#f00"/>
            <path d="M2003 570V693" stroke="#333" stroke-width="1.500"/><path d="M1999.500 595h7l-3.500 32zM1999.500 667.500h7L2003 636z" fill="none" stroke="#111"/>
            <text class="dim" transform="translate(1999 672) rotate(-90)">1,00000</text>
          </svg>
          <svg class="confirm" viewBox="0 0 72 60"><path d="M23 2H3v17c0 5 3 7 8 7h13" fill="none" stroke="#d2e4ee" stroke-width="2"/><path d="M24 26l11-9v5c6 0 9-3 11-6 0 8-4 13-11 14v5z" fill="#dcebf3" stroke="#b4cbd8"/><path d="M48 37l5-5 6.500 6.500L66 32l5 5-6.500 6.500L71 50l-5 5-6.500-6.500L53 55l-5-5 6.500-6.500z" fill="#f4bcb8" stroke="#eda9a5"/></svg>
          <nav class="panetabs">
            <button class="on" aria-label="3DEXPERIENCE"><svg class="ic"><use href="#compass"/></svg></button><button aria-label="Home"><svg class="ic"><use href="#home"/></svg></button><button aria-label="Design library"><svg class="ic"><use href="#books"/></svg></button><button aria-label="File explorer"><svg class="ic"><use href="#folder"/></svg></button><button aria-label="View palette"><svg class="ic"><use href="#palette"/></svg></button><button aria-label="Appearances"><svg class="ic"><use href="#ball"/></svg></button><button aria-label="Custom properties"><svg class="ic"><use href="#props"/></svg></button>
          </nav>
        </div>
      </div>
    </main>
    <aside class="pane">
      <header><button aria-label="Collapse pane"><svg class="ic"><use href="#left2"/></svg></button><h1>3DEXPERIENCE Marketplace</h1><button aria-label="Pane settings"><svg class="i16"><use href="#gear"/></svg></button><button aria-label="Pin pane"><svg class="i14"><use href="#pin"/></svg></button></header>
      <div class="pane-body">
        <h2>Update Available</h2>
        <p>A new update of the 3DEXPERIENCE Marketplace for SOLIDWORKS add-in is available for download: 6.31.1046</p>
        <button class="primary">Get the Update</button>
        <button class="secondary">Not Now</button>
        <label class="ask"><input type="checkbox"><span>Don’t ask again for this update</span></label>
      </div>
    </aside>
    <aside class="render">
      <div class="renderset">
        <div class="grip"></div>
        <button aria-label="Edit appearance"><svg class="ic"><use href="#spheredit"/></svg></button>
        <button aria-label="Copy appearance"><svg class="ic"><use href="#sph2"/></svg></button>
        <button aria-label="Paste appearance"><svg class="ic"><use href="#sphdoc"/></svg></button>
        <button aria-label="Edit scene"><svg class="ic"><use href="#sphscene"/></svg></button>
        <button aria-label="Edit decal"><svg class="ic"><use href="#sphcan"/></svg></button>
        <button aria-label="Target"><svg class="ic"><use href="#bluetarget"/></svg></button>
        <button aria-label="Preview window"><svg class="ic"><use href="#sphwin"/></svg></button>
        <button aria-label="Integrated preview"><svg class="ic"><use href="#sphbox"/></svg></button>
        <button aria-label="Final render"><svg class="ic"><use href="#sph"/></svg></button>
        <button aria-label="Render region"><svg class="ic"><use href="#sphdash"/></svg></button>
        <button aria-label="Batch render"><svg class="ic"><use href="#sph4"/></svg></button>
        <button aria-label="Render options"><svg class="ic"><use href="#sphgear"/></svg></button>
        <button aria-label="Schedule render"><svg class="ic"><use href="#sphclock"/></svg></button>
        <button aria-label="Recall render"><svg class="ic"><use href="#sphback"/></svg></button>
      </div>
    </aside>
  </div>
  <svg class="markup" viewBox="3260 0 420 155" aria-hidden="true"><path d="M3310 145C3303 142 3290 143 3282 139C3272 134 3272 124 3271.500 110C3272 85 3269 60 3271.500 48C3275 36 3295 32 3312 29C3322 27 3326 25 3335 24.500C3350 23.500 3358 24 3373 21C3400 17 3425 10 3453 7C3475 3 3500 3 3520 3.500C3540 4 3550 5 3560 9C3575 14 3590 19 3602 23C3618 28 3630 33 3640 40C3654 50 3658 60 3662 72C3667 87 3668 89 3663 95C3658 103 3640 110 3625 119C3608 128 3590 135 3575 138C3563 140 3550 140.500 3535 140C3500 139 3450 139 3420 137C3400 136 3392 135 3380 131C3362 126 3345 119 3331 115C3315 110 3295 106 3285 102C3279 99 3275 97 3272 95" fill="none" stroke="#ff5500" stroke-width="4" stroke-linecap="round"/></svg>
</div>
<script src="model.js"></script>
</body>
</html>
```

FILE: styles.css
```css
* { box-sizing: border-box; }
body { margin: 0; background: #fff; color: #111; font: 13px/19px "Noto Sans", "Open Sans", sans-serif; }
button { margin: 0; padding: 0; border: 0; background: none; color: inherit; font: inherit; display: flex; align-items: center; justify-content: center; white-space: nowrap; }
input { font: inherit; border: 0; background: none; padding: 0; min-width: 0; outline: 0; }
.defs { position: absolute; width: 0; height: 0; }
.ic { width: 20px; height: 20px; flex: none; display: block; }
.i16 { width: 16px; height: 16px; flex: none; }
.i14 { width: 14px; height: 14px; flex: none; }
.caret { border: 3px solid transparent; border-top-color: #333; border-bottom: 0; flex: none; }
.caret.dim { border-top-color: #999; }
.caret.big { border-width: 4px 4px 0; border-top-color: #666; }

.app { position: relative; min-height: 100vh; display: flex; flex-direction: column; padding-top: 34px; }

.titlebar { position: relative; display: flex; align-items: center; height: 40px; background: #f7f7f7; border: solid #bfbfbf; border-width: 1px 0; }
.brand { width: 142px; padding-left: 5px; display: flex; align-items: center; gap: 4px; color: #d8272c; font: italic 13px "Open Sans", sans-serif; }
.brand b { font-weight: 800; }
.ds { width: 21px; height: 21px; }
.menu { display: flex; align-items: center; align-self: stretch; width: 308px; padding-left: 5px; gap: 17px; border-right: 1px solid #bfbfbf; }
.pinbtn { fill: #888; margin: 0 6px 6px auto; }
.quick { display: flex; align-items: center; padding-left: 18px; }
.q-solo { width: 32px; margin-right: 5px; }
.q { width: 24px; }
.qa { width: 23px; height: 20px; }
.qa.narrow { width: 19px; }
.select { width: 33px; height: 33px; background: #b1b1b1; border: 1px solid #777; }
.select-more { width: 14px; height: 33px; background: #fff; border: 1px solid #777; border-left: 0; }
.q-tool { width: 33px; }
.qg { width: 12px; height: 20px; }
.doc-title { position: absolute; left: 54.36%; top: 11px; }
.snap { position: absolute; left: 46.1%; top: -1px; width: 301px; height: 1px; background: #e3e3e3; }
.snap i { display: block; width: 60px; height: 1px; background: #0063b1; }
.title-right { display: flex; align-items: center; margin-left: auto; color: #333; }
.title-right > button { width: 41px; height: 30px; }
.title-right > button:last-child { width: 36px; }
.search { display: flex; align-items: center; width: 252px; height: 30px; margin-right: 3px; padding-left: 6px; background: #fff; border: 1px solid #b5b5b5; border-radius: 2px; }
.search input { flex: 1; padding-left: 7px; }
.search input::placeholder { color: #555; opacity: 1; }
.search button { width: 20px; height: 24px; }

.ribbon { display: flex; height: 82px; padding-left: 6px; background: #f7f7f7; border-bottom: 1px solid #858585; }
.exit { width: 50px; padding: 1px 0 2px; display: flex; flex-direction: column; }
.exit-main { flex: 1; flex-direction: column; justify-content: flex-start; gap: 2px; padding-top: 4px; background: #b1b1b1; border: 1px solid #777; }
.exit-more { height: 20px; background: #fff; border: 1px solid #999; border-top: 0; }
.cmd { flex: none; align-self: stretch; flex-direction: column; justify-content: flex-start; padding-top: 6px; text-align: center; line-height: 19px; }
.cmd .ic { margin-bottom: 2px; }
.cmd > .caret { margin-top: auto; margin-bottom: 11px; }
.cmd:disabled { color: #b9b9b9; }
.sep, .tools, .ribbon .w86 { background: linear-gradient(#bfbfbf, #bfbfbf) left 50% / 1px 78px no-repeat; }
.w116 { width: 116px; } .w86 { width: 87px; } .w104 { width: 104px; } .w60 { width: 60px; } .w64 { width: 64px; }
.w158 { width: 159px; } .w51 { width: 51px; } .w49 { width: 49px; } .w52 { width: 53px; } .w70 { width: 70px; } .w98 { width: 98px; }
.tools { display: grid; grid-template: repeat(3, 26px) / repeat(4, 40px); width: 149px; padding: 1px 0 0 5px; }
.tools button { justify-content: flex-start; gap: 7px; width: 40px; }
.tools button:nth-child(4n) { width: 20px; }
.list { display: grid; grid-template-rows: repeat(3, 26px); width: 199px; padding: 1px 5px 0 4px; }
.list button { justify-content: flex-start; gap: 6px; }
.list .caret { margin-left: auto; }
.collapse { margin-left: auto; align-self: flex-end; width: 24px; height: 26px; }

.work { flex: 1; display: flex; }
.main { position: relative; flex: 1; min-width: 0; display: flex; flex-direction: column; }
.tabrow { display: flex; height: 29px; margin-top: -1px; }
.tabs { display: flex; font-size: 14px; color: #222; }
.tabs button { background: #d3d3d3; border: solid #858585; border-width: 1px 1px 1px 0; }
.tabs .on { background: #f7f7f7; border-top-color: #f7f7f7; font-weight: 700; }
.t75 { width: 75px; } .t67 { width: 67px; } .t124 { width: 124px; } .t70 { width: 70px; } .t74 { width: 74px; } .t136 { width: 136px; } .t173 { width: 173px; } .t56 { width: 56px; } .t158 { width: 158px; } .t128 { width: 128px; }
.docctl { display: flex; align-items: center; margin-left: auto; padding: 2px 6px 0 0; color: #999; }
.docctl button { width: 26px; }
.hud { position: absolute; left: calc(50% + 150px); top: 5px; transform: translateX(-50%); display: flex; opacity: .85; }
.hud button { width: 26px; height: 20px; }
.hud .more { width: 40px; gap: 6px; }
.hud .caret { border-top-color: #777; }

.stage { flex: 1; display: flex; }
.strip { width: 33px; background: #f7f7f7; display: flex; flex-direction: column; align-items: center; }
.strip button, .renderset button { height: 26px; width: 32px; }
.grip { height: 13px; width: 27px; flex: none; background: radial-gradient(circle, #888 1px, transparent 1px) 0 0 / 4px 7px repeat-x; }
.strip hr { width: 25px; height: 1px; margin: 4px 0 3px; border: 0; background: #888; }
.strip hr.full { width: 30px; margin: 7px 3px 0 0; }
.tree { width: 272px; background: #f7f7f7; border: solid #999; border-width: 0 1px; border-left-color: #bfbfbf; font-size: 14px; }
.handle { height: 25px; margin-right: 2px; border: solid #bfbfbf; border-width: 0 0 1px; background: linear-gradient(#a8c0c8, #a8c0c8) 0 0 / 100% 1px no-repeat, linear-gradient(#c5c5c5, #c5c5c5) 0 4px / 100% 1px no-repeat; display: flex; justify-content: center; padding-top: 11px; }
.handle i { width: 6px; height: 6px; border-radius: 50%; background: #bbb; border: 1px solid #888; }
.ptabs { display: flex; height: 26px; margin: 4px 2px 0 0; border-bottom: 1px solid #aaa; }
.ptabs button { width: 40px; background: #d3d3d3; border: solid #888; border-width: 1px 1px 0 0; }
.ptabs .on { background: #f7f7f7; height: 26px; }
.ptabs .next { width: 20px; margin-left: auto; background: none; border: 0; }
.filter { display: flex; align-items: center; height: 32px; margin: 0 5px 0 3px; padding-left: 1px; border: 1px solid #bfbfbf; }
.filter input { flex: 1; }
.tree ul { list-style: none; margin: 0 2px 0 0; padding: 0; }
.tree li { display: flex; align-items: center; height: 24px; padding-left: 24px; gap: 5px; white-space: nowrap; }
.tree .root { padding-left: 1px; gap: 3px; }
.tree .exp::before { content: ""; width: 0; margin: 0 8px 0 -16px; border: 4px solid transparent; border-left: 5px solid #555; border-right: 0; }
.tree .exp { gap: 0; }
.tree .exp .ic { margin: 0 5px 0 3px; }
.tree .off { color: #999; }
.rollback { height: 4px; margin-right: 2px; background: #c9c9e2; border-bottom: 2px solid #aeaecb; }

.viewport { position: relative; flex: 1; min-width: 0; }
.model { position: absolute; inset: 0; width: 100%; height: 100%; }
.dim { font: 21px "Liberation Sans", sans-serif; stroke: #000; }
.confirm { position: absolute; right: 38px; top: 5px; width: 72px; height: 60px; }
.panetabs { position: absolute; right: -1px; top: 29px; width: 34px; border: solid #858585; border-width: 1px 0 0 1px; }
.panetabs button { width: 33px; height: 30px; background: #d3d3d3; border: solid #858585; border-width: 0 1px 1px 0; }
.panetabs .on { background: #f7f7f7; border-right-color: #f7f7f7; }

.pane { width: 304px; display: flex; flex-direction: column; background: #f7f7f7; border: solid #777; border-width: 0 3px 0 1px; font-family: "Liberation Sans", Arial, sans-serif; }
.pane header { display: flex; align-items: center; height: 23px; padding: 0 7px 0 4px; background: #a9a9ad; border-bottom: 1px solid #111; gap: 4px; }
.pane h1 { flex: 1; margin: 0; text-align: center; font: 700 14px/19px "Noto Sans", sans-serif; color: #000; white-space: nowrap; }
.pane-body { flex: 1; margin: 2px 1px 0 5px; padding: 45px 12px 0 19px; background: #fff; border: 1px solid #e4dfe4; border-width: 1px 0 0 1px; font-size: 20px; line-height: 30px; color: #7b7f83; }
.pane h2 { margin: 0 0 26px; font-size: 23px; line-height: 24px; color: #3d3d3d; }
.pane p { margin: 0 0 20px; width: 240px; }
.primary, .secondary { width: 100%; border-radius: 5px; }
.primary { height: 61px; background: #368ec4; color: #fff; }
.secondary { height: 56px; margin-top: 7px; background: #f1f1f1; border: 1px solid #b4b6ba; color: #3d3d3d; }
.ask { display: flex; gap: 20px; margin-top: 14px; }
.ask input { appearance: none; flex: none; width: 25px; height: 25px; margin: 6px 0 0; background: #eee; border: 1px solid #b4b6ba; }

.render { width: 29px; background: #f7f7f7; }
.renderset { display: flex; flex-direction: column; align-items: center; padding-bottom: 7px; border-bottom: 1px solid #888; }
.markup { position: absolute; right: 158px; top: 0; width: 420px; height: 155px; pointer-events: none; }
```

FILE: model.js
```js
// Draws the side view of the island mesh: slab, walls and rough underside.
const floor = [[798,711],[819,715],[872,716],[890,719],[926,720],[944,722],[957,734],[970,722],[1042,724],[1086,727],[1131,725],[1194,723],[1219,728],[1238,722],[1269,727],[1340,724],[1430,725],[1500,730],[1560,731],[1600,737],[1650,735],[1740,738],[1800,733],[1827,735],[1854,741],[1889,732],[1943,738],[1979,737],[1988,742],[2023,743],[2050,738],[2090,736],[2144,737],[2175,730],[2200,732],[2211,738],[2246,737],[2282,742],[2296,748],[2318,748],[2367,742],[2470,742],[2500,749],[2560,743],[2640,739],[2707,735],[2720,733],[2728,744],[2736,735],[2769,737],[2778,730],[2854,730],[2897,733],[2921,727],[2970,732],[3060,729],[3091,728],[3109,725],[3167,720],[3171,715]];
let seed = 7;
const rnd = () => (seed = (seed * 16807) % 2147483647) / 2147483647;
const floorAt = x => {
  const i = floor.findIndex(p => p[0] >= x);
  if (i < 1) return 712;
  const [a, b] = [floor[i - 1], floor[i]];
  return a[1] + (b[1] - a[1]) * (x - a[0]) / (b[0] - a[0]);
};
const edge = [];
for (let x = 798; x <= 3171; x += 3 + rnd() * 6) edge.push([x, floorAt(x) + (rnd() - .5) * (x > 2290 && x < 2480 ? .5 : 4)]);
const pts = list => list.map(p => p[0].toFixed(1) + ' ' + p[1].toFixed(1)).join('L');

let light = '', dark = '', mesh = '', thin = '';
for (let i = 0; i < 280; i++) {
  const x = 800 + rnd() * 2365;
  light += `M${x.toFixed(1)} 670L${(x + (rnd() - .5) * 2).toFixed(1)} ${(695 + rnd() * 17).toFixed(1)}`;
}
const walls = [828,838,883,938,948,980,996,1083,1093,1135,1206,1239,1297,1302,1325,1390,1402,1455,1480,1530,1548,1610,1622,1675,1690,1735,1790,1836,1866,1875,1888,1969,2010,2043,2075,2094,2112,2130,2195,2208,2228,2341,2357,2483,2530,2570,2600,2654,2702,2705,2774,2948,2996,3018,3100,3106,3135,3148,3155,3172];
for (const x of walls) {
  const lean = x < 2000 ? 3 : -3;
  dark += `M${x} 669L${x + lean} 708l${lean} ${4 + Math.round(rnd() * 5)}`;
}
for (let x = 810; x < 3165; x += 6 + rnd() * 6) {
  const bottom = floorAt(x);
  const top = 711;
  let px = x, py = top + rnd() * (bottom - top);
  let d = `M${px.toFixed(1)} ${py.toFixed(1)}`;
  const n = 3 + Math.floor(rnd() * 5);
  for (let k = 0; k < n; k++) {
    px += 2 + rnd() * 8;
    if (px > 3168) break;
    py = top + rnd() * Math.max(3, Math.min(floorAt(px), 738) - top);
    d += `L${px.toFixed(1)} ${py.toFixed(1)}`;
  }
  if (rnd() < .5) mesh += d; else thin += d;
}
for (let row = 0; row < 3; row++) {
  let on = false;
  for (let x = 830; x < 3140; x += 8 + rnd() * 10) {
    const y = 713 + (Math.min(floorAt(x), 738) - 713) * (.3 + row * .25) + (rnd() - .5) * 4;
    mesh += (on ? 'L' : 'M') + x.toFixed(1) + ' ' + y.toFixed(1);
    on = rnd() > .15;
  }
}
document.getElementById('body').innerHTML = `
  <path d="M666 627H3314V668H666z" fill="url(#lines)"/>
  <path d="M795 668L798 711L${pts(edge)}L3174 668z" fill="url(#lines)"/>
  <path d="${light}" stroke="#c9cad8" stroke-opacity=".7" fill="none"/>
  <path d="M798 712H3170L${pts([...edge].reverse())}z" fill="#8e8e8e"/>
  <path d="M795 668L798 711L${pts(edge)}L3174 668" fill="none" stroke="#000"/>
  <path d="${dark}" fill="none" stroke="#111"/>
  <path d="${mesh}" fill="none" stroke="#111"/>
  <path d="${thin}" fill="none" stroke="#222" stroke-width=".6"/>`;
```
